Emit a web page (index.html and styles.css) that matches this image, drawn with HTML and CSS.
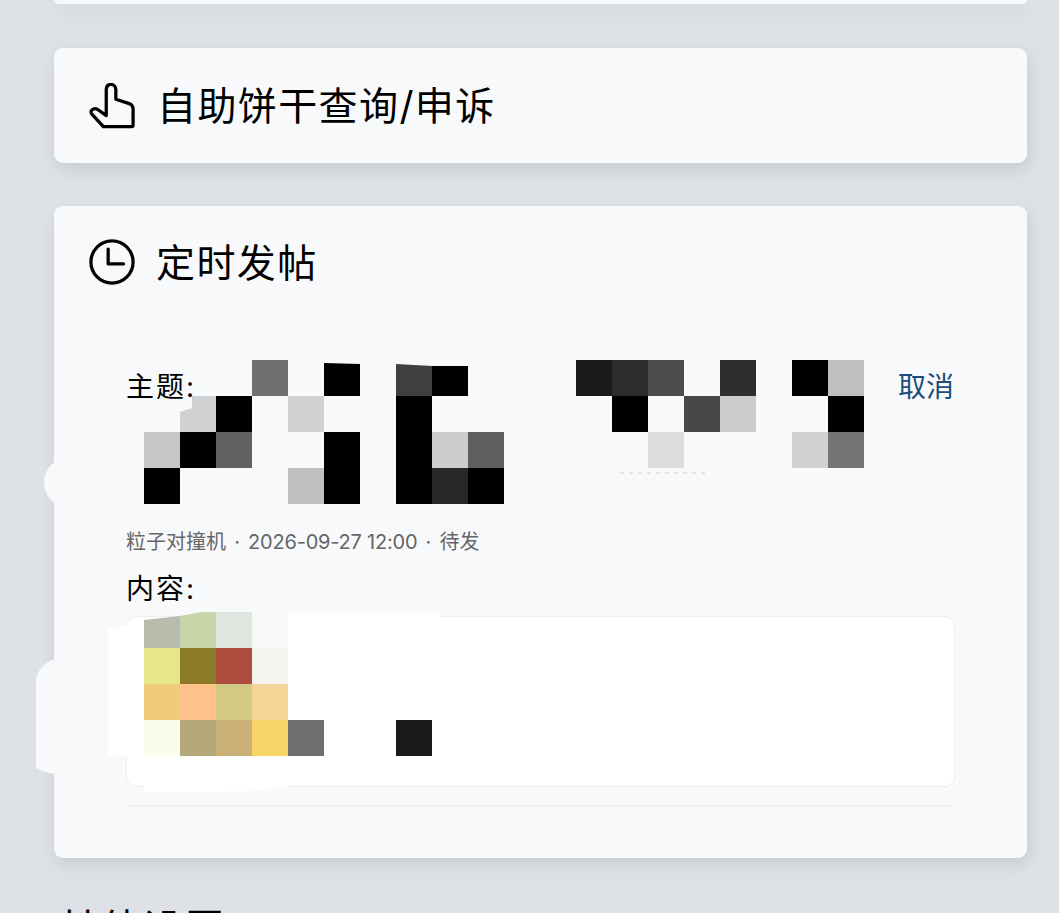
FILE: index.html
```html
<!DOCTYPE html>
<html lang="zh-CN">
<head>
<meta charset="utf-8">
<title>定时发帖</title>
<link rel="stylesheet" href="styles.css">
</head>
<body>
<main class="page">
  <div class="card stub"></div>

  <section class="card link-card">
    <svg class="icon" viewBox="0 0 48 48" aria-hidden="true"><path d="M15 45.500 L3 32.500 C1.500 30.500 2 28.500 4 27.500 C6.500 26 9 27 11 29 L18 34 L18 7 C18 3.500 20 1.500 23 1.500 C26 1.500 28 4 28 7 L28 17 L42 21.500 C45 22.500 46 24.500 46 27.500 L46 44 C46 45 45.500 45.500 44.500 45.500 Z"/></svg>
    <h2 class="title">自助饼干查询/申诉</h2>
  </section>

  <section class="card schedule">
    <header class="schedule-head">
      <svg class="icon" viewBox="0 0 48 48" aria-hidden="true"><circle cx="24" cy="24" r="22"/><path d="M20 10.500 V26 H36"/></svg>
      <h2 class="title">定时发帖</h2>
    </header>

    <article class="post">
      <div class="subject-row">
        <span class="label">主题:</span>
        <a class="cancel">取消</a>
        <div class="mosaic subject-mosaic" aria-hidden="true">
          <i></i><i></i><i></i><i class="g70"></i><i></i><i class="k cut-a"></i><i></i><i class="g3f cut-b"></i><i class="k cut-c"></i><i></i><i></i><i></i><i class="g1b"></i><i class="g2c"></i><i class="g4d"></i><i></i><i class="g2d"></i><i></i><i class="k"></i><i class="gc0"></i>
          <i></i><i class="gd0 cut-d"></i><i class="k"></i><i></i><i class="gd0"></i><i></i><i></i><i class="k"></i><i></i><i></i><i></i><i></i><i></i><i class="k"></i><i></i><i class="g48"></i><i class="gcb"></i><i></i><i></i><i class="k"></i>
          <i class="gc6"></i><i class="k"></i><i class="g60"></i><i></i><i></i><i class="k"></i><i></i><i class="k"></i><i class="gcd"></i><i class="g5e"></i><i></i><i></i><i></i><i></i><i class="gdc"></i><i></i><i></i><i></i><i class="gd0"></i><i class="g74"></i>
          <i class="k"></i><i></i><i></i><i></i><i class="gc0"></i><i class="k"></i><i></i><i class="k"></i><i class="g28"></i><i class="k"></i>
        </div>
        <div class="smudge" aria-hidden="true"></div>
      </div>
      <p class="meta">粒子对撞机<span class="sep"> · </span><span class="date">2026-09-27 12:00</span><span class="sep"> · </span>待发</p>
      <div class="label content-label">内容:</div>
      <div class="content-box">
        <div class="mosaic content-mosaic" aria-hidden="true">
          <i class="c1"></i><i class="c2"></i><i class="c3"></i><i class="c4"></i><i></i><i></i><i></i><i></i>
          <i class="c5"></i><i class="c6"></i><i class="c7"></i><i class="c8"></i><i></i><i></i><i></i><i></i>
          <i class="c9"></i><i class="c10"></i><i class="c11"></i><i class="c12"></i><i></i><i></i><i></i><i></i>
          <i class="c13"></i><i class="c14"></i><i class="c15"></i><i class="c16"></i><i class="g70"></i><i></i><i></i><i class="g1b"></i>
          <i class="w"></i><i class="w"></i><i class="w w-mid"></i><i class="w w-end"></i>
        </div>
        <div class="patch patch-left"></div>
        <div class="patch patch-top"></div>
      </div>
    </article>
    <div class="blot blot-circle"></div>
    <div class="blot blot-side"></div>
  </section>

  <h2 class="section-title">其他设置</h2>
</main>
</body>
</html>
```
FILE: styles.css
```css
* { box-sizing: border-box; }
html, body { margin: 0; height: 100%; overflow: hidden; }
body {
  background: #dee1e5;
  color: #000;
  font-family: Inter, "Noto Sans CJK SC", "Noto Sans", sans-serif;
}
.page { padding: 0 32px 0 54px; }
.card {
  background: #f8f9fb;
  border-radius: 9px;
  box-shadow: 2px 6px 16px rgba(0, 0, 0, .1);
}
.stub { height: 4px; border-radius: 0 0 9px 9px; margin-bottom: 44px; }
.link-card {
  height: 115px;
  margin-bottom: 43px;
  padding: 0 35px;
  display: flex;
  align-items: center;
  gap: 22px;
}
.icon {
  flex: none;
  width: 46px;
  height: 46px;
  fill: none;
  stroke: #000;
  stroke-width: 3.400;
  stroke-linecap: round;
  stroke-linejoin: round;
}
.title { margin: 1px 0 0; font-size: 39px; line-height: 56px; font-weight: 400; letter-spacing: 1.400px; }
.schedule { position: relative; height: 652px; padding: 32px 72px 0; }
.schedule-head { display: flex; align-items: center; gap: 21px; margin: 0 -37px; height: 48px; }
.post { padding-top: 66px; height: 568px; }
.subject-row { position: relative; display: flex; justify-content: space-between; height: 52px; align-items: flex-start; }
.label { font-size: 28px; line-height: 40px; letter-spacing: 2px; }
.subject-row .label { padding-top: 15px; }
.cancel { font-size: 28px; line-height: 40px; color: #1d4d7d; padding-top: 15px; margin-right: 1px; }
.mosaic { display: grid; grid-auto-rows: 36px; position: absolute; }
.mosaic i { display: block; }
.subject-mosaic { grid-template-columns: repeat(20, 36px); left: 18px; top: 8px; }
.cut-a { clip-path: polygon(0 3px, 100% 4px, 100% 100%, 0 100%); }
.cut-b { clip-path: polygon(0 4px, 100% 6px, 100% 100%, 0 100%); }
.cut-c { clip-path: polygon(0 6px, 100% 6px, 100% 100%, 0 100%); }
.cut-d { clip-path: polygon(12px 0, 100% 0, 100% 100%, 0 100%, 0 16px, 12px 12px); }
.smudge {
  position: absolute;
  left: 494px;
  top: 120px;
  width: 88px;
  height: 2px;
  background: repeating-linear-gradient(90deg, #e2e4e6 0 4px, transparent 4px 9px);
}
.meta { margin: 123px 0 0; font-size: 20px; line-height: 30px; color: #666; }
.sep { margin: 0 2.500px; }
.date { letter-spacing: -.2px; }
.content-label { margin-top: 12px; }
.content-box {
  position: relative;
  height: 171px;
  margin-top: 7px;
  background: #fff;
  border: 1px solid #eceef0;
  border-radius: 10px;
}
.content-box::after {
  content: "";
  position: absolute;
  left: -1px;
  right: -1px;
  bottom: -20px;
  border-bottom: 1px solid #eceef0;
}
.content-mosaic { grid-template-columns: repeat(8, 36px); left: 17px; top: -5px; }
.patch { position: absolute; background: #fff; }
.patch-left { left: -19px; top: 6px; width: 36px; height: 133px; clip-path: polygon(0 6px, 100% 0, 100% 100%, 0 100%); }
.patch-top { left: 161px; top: -5px; width: 152px; height: 6px; border-radius: 4px 4px 0 0; }
.w { background: #fff; }
.w-mid { clip-path: polygon(0 0, 100% 0, 100% 35px, 0 36px); }
.w-end { clip-path: polygon(0 0, 100% 0, 100% 31px, 0 35px); }
.k { background: #000; }
.g1b { background: #1b1b1b; } .g28 { background: #282828; } .g2c { background: #2c2c2c; } .g2d { background: #2d2d2d; }
.g3f { background: #3f3f3f; } .g48 { background: #484848; } .g4d { background: #4d4d4d; } .g5e { background: #5e5f5e; }
.g60 { background: #606260; } .g70 { background: #707070; } .g74 { background: #747474; } .gc0 { background: #c0c0c0; }
.gc6 { background: #c6c6c6; } .gcb { background: #cbcccd; } .gcd { background: #cdcdcd; } .gd0 { background: #d0d1d2; } .gdc { background: #dcdddf; }
.c1 { background: #b7bcac; clip-path: polygon(0 8px, 100% 4px, 100% 100%, 0 100%); }
.c2 { background: #c8d5a8; clip-path: polygon(0 4px, 60% 0, 100% 0, 100% 100%, 0 100%); }
.c3 { background: #dfe5df; } .c4 { background: #faf9f7; }
.c5 { background: #e9e58b; } .c6 { background: #8b7b28; } .c7 { background: #ae4d3f; } .c8 { background: #f3f4ee; }
.c9 { background: #efcb7b; } .c10 { background: #fec28a; } .c11 { background: #d3cb84; } .c12 { background: #f4d497; }
.c13 { background: #fbfcec; } .c14 { background: #b5a97b; } .c15 { background: #cbb177; } .c16 { background: #f8d365; }
.blot { position: absolute; background: #f8f9fb; }
.blot-circle { left: -10px; top: 251px; width: 51px; height: 51px; border-radius: 50%; }
.blot-side { left: -18px; top: 451px; width: 30px; height: 118px; clip-path: polygon(100% 0, 60% 2px, 30% 7px, 10% 14px, 0 21px, 0 111px, 30% 115px, 60% 117px, 100% 118px); }
.section-title { margin: 43px 0 0 4px; font-size: 41px; line-height: 56px; font-weight: 400; letter-spacing: 1px; }
```
